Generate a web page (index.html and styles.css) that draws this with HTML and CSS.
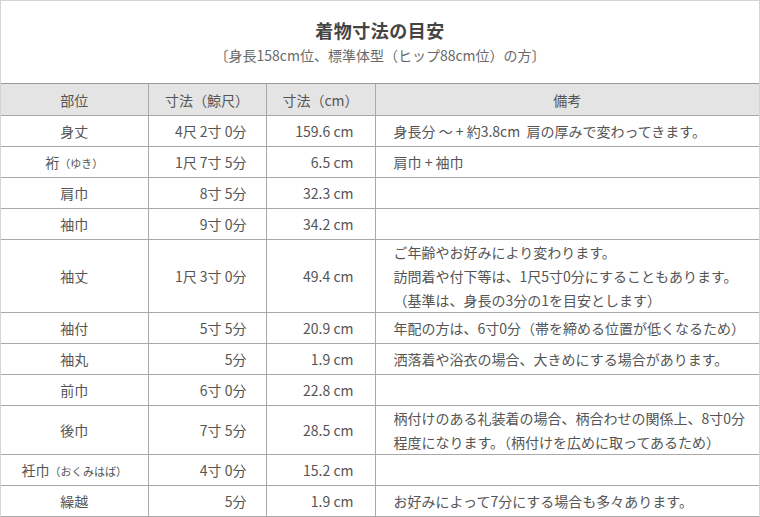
FILE: index.html
```html
<!DOCTYPE html>
<html lang="ja">
<head>
<meta charset="utf-8">
<link rel="stylesheet" href="styles.css">
</head>
<body>
<div class="sheet">
  <div class="heading">
    <h1 class="title">着物寸法の目安</h1>
    <p class="subtitle">〔身長158cm位、標準体型（ヒップ88cm位）の方〕</p>
  </div>
  <table class="sizes">
    <colgroup>
      <col class="c1"><col class="c2"><col class="c3"><col class="c4">
    </colgroup>
    <thead>
      <tr><th>部位</th><th>寸法（鯨尺）</th><th>寸法（cm）</th><th>備考</th></tr>
    </thead>
    <tbody>
      <tr><td class="part">身丈</td><td class="num">4尺 2寸 0分</td><td class="cm">159.6 cm</td><td class="note">身長分 ～ + 約3.8cm&nbsp; 肩の厚みで変わってきます。</td></tr>
      <tr><td class="part">裄<span class="small">（ゆき）</span></td><td class="num">1尺 7寸 5分</td><td class="cm">6.5 cm</td><td class="note">肩巾 + 袖巾</td></tr>
      <tr><td class="part">肩巾</td><td class="num">8寸 5分</td><td class="cm">32.3 cm</td><td class="note"></td></tr>
      <tr><td class="part">袖巾</td><td class="num">9寸 0分</td><td class="cm">34.2 cm</td><td class="note"></td></tr>
      <tr><td class="part">袖丈</td><td class="num">1尺 3寸 0分</td><td class="cm">49.4 cm</td><td class="note">ご年齢やお好みにより変わります。<br>訪問着や付下等は、1尺5寸0分にすることもあります。<br>（基準は、身長の3分の1を目安とします）</td></tr>
      <tr><td class="part">袖付</td><td class="num">5寸 5分</td><td class="cm">20.9 cm</td><td class="note">年配の方は、6寸0分（帯を締める位置が低くなるため）</td></tr>
      <tr><td class="part">袖丸</td><td class="num">5分</td><td class="cm">1.9 cm</td><td class="note">洒落着や浴衣の場合、大きめにする場合があります。</td></tr>
      <tr><td class="part">前巾</td><td class="num">6寸 0分</td><td class="cm">22.8 cm</td><td class="note"></td></tr>
      <tr><td class="part">後巾</td><td class="num">7寸 5分</td><td class="cm">28.5 cm</td><td class="note">柄付けのある礼装着の場合、柄合わせの関係上、8寸0分<br>程度になります。（柄付けを広めに取ってあるため）</td></tr>
      <tr><td class="part">衽巾<span class="small">（おくみはば）</span></td><td class="num">4寸 0分</td><td class="cm">15.2 cm</td><td class="note"></td></tr>
      <tr><td class="part">繰越</td><td class="num">5分</td><td class="cm">1.9 cm</td><td class="note">お好みによって7分にする場合も多々あります。</td></tr>
    </tbody>
  </table>
</div>
</body>
</html>
```
FILE: styles.css
```css
html, body {
  margin: 0;
  padding: 0;
  background: #ffffff;
}
body {
  font-family: "Noto Sans CJK JP", "Noto Sans", sans-serif;
  color: #555555;
}
.sheet {
  width: 760px;
  box-sizing: border-box;
  border-top: 1px solid #d4d4d4;
  border-left: 1px solid #d4d4d4;
  border-right: 1px solid #d4d4d4;
}
.heading {
  height: 82px;
  box-sizing: border-box;
  padding-top: 16px;
  text-align: center;
}
.title {
  margin: 0;
  font-size: 18px;
  line-height: 26px;
  font-weight: bold;
  color: #444444;
  letter-spacing: 0.5px;
}
.subtitle {
  margin: 2px 0 0;
  font-size: 14px;
  line-height: 20px;
  color: #6a6a6a;
}
.sizes {
  width: 100%;
  border-collapse: collapse;
  table-layout: fixed;
  font-size: 14px;
}
.c1 { width: 147px; }
.c2 { width: 118px; }
.c3 { width: 109px; }
.c4 { width: auto; }
.sizes th,
.sizes td {
  border: 1px solid #a8a8a8;
  height: 31px;
  padding: 0;
  line-height: 24px;
  vertical-align: middle;
  box-sizing: border-box;
}
.sizes tr > :first-child { border-left: none; }
.sizes tr > :last-child { border-right: none; }
.sizes th {
  background: #e4e4e4;
  font-weight: normal;
  color: #555555;
  border-top: 1px solid #999999;
  height: 32px;
}
.part { text-align: center; }
.num { text-align: right; padding-right: 19px !important; }
.cm { text-align: right; padding-right: 21px !important; }
.note { text-align: left; padding-left: 18px !important; }
.small { font-size: 11px; }
```
